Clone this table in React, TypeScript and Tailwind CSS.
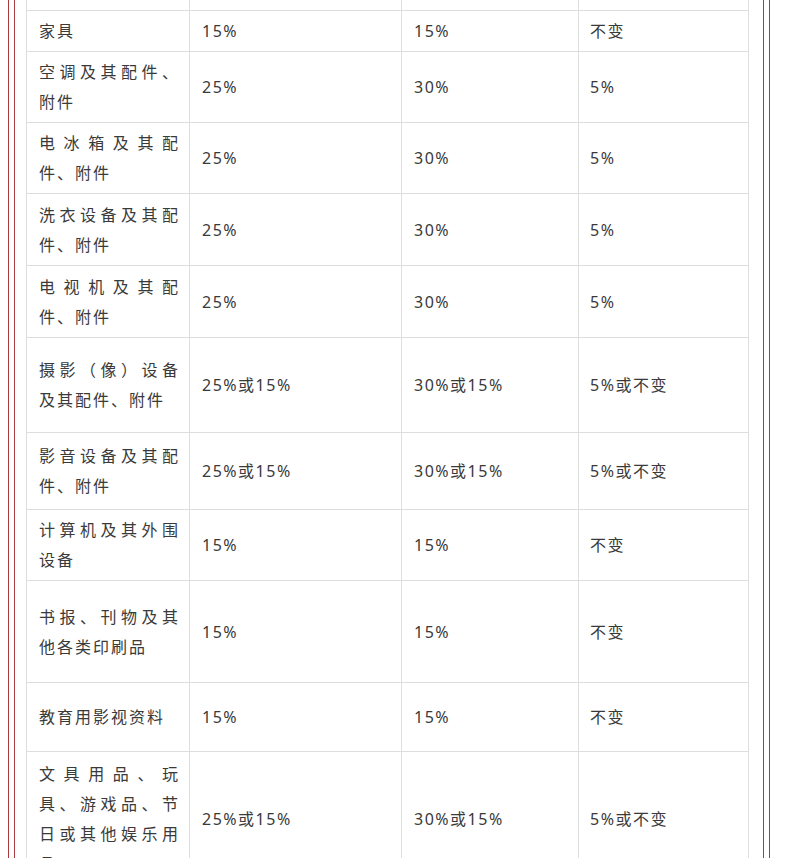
import React from "react";

type Row = { h: number; a: string; b: string; c: string; d: string };

const rows: Row[] = [
  { h: 40, a: "家具", b: "15%", c: "15%", d: "不变" },
  { h: 70, a: "空调及其配件、附件", b: "25%", c: "30%", d: "5%" },
  { h: 70, a: "电冰箱及其配件、附件", b: "25%", c: "30%", d: "5%" },
  { h: 71, a: "洗衣设备及其配件、附件", b: "25%", c: "30%", d: "5%" },
  { h: 71, a: "电视机及其配件、附件", b: "25%", c: "30%", d: "5%" },
  { h: 94, a: "摄影（像）设备及其配件、附件", b: "25%或15%", c: "30%或15%", d: "5%或不变" },
  { h: 76, a: "影音设备及其配件、附件", b: "25%或15%", c: "30%或15%", d: "5%或不变" },
  { h: 70, a: "计算机及其外围设备", b: "15%", c: "15%", d: "不变" },
  { h: 101, a: "书报、刊物及其他各类印刷品", b: "15%", c: "15%", d: "不变" },
  { h: 68, a: "教育用影视资料", b: "15%", c: "15%", d: "不变" },
  { h: 133, a: "文具用品、玩具、游戏品、节日或其他娱乐用品。", b: "25%或15%", c: "30%或15%", d: "5%或不变" },
];

export default function App() {
  return (
    <div
      className="w-[786px] h-[858px] overflow-hidden bg-white"
      style={{ fontFamily: '"Noto Sans", "Noto Sans CJK SC", sans-serif' }}
    >
      <div className="ml-[8px] w-[762px] h-full border-x border-[#ad3b3b] px-[5px]">
        <div className="h-full border-x border-[#ad3b3b] pl-[11px]">
          <div className="w-[723px] bg-[#dedede] px-px pb-px grid grid-cols-[162px_211px_176px_169px] gap-px text-[16px] leading-[30px] text-[#3a3a3a]">
            <div className="bg-white h-[10px]" />
            <div className="bg-white h-[10px]" />
            <div className="bg-white h-[10px]" />
            <div className="bg-white h-[10px]" />
            {rows.map((r, i) => (
              <React.Fragment key={i}>
                <div className="bg-white flex items-center pl-[12px] pr-[9px]" style={{ height: r.h }}>
                  <div className="w-full text-justify tracking-[2px]">{r.a}</div>
                </div>
                <div className="bg-white flex items-center pl-[12px]" style={{ height: r.h }}>
                  <div className="tracking-[1.5px]">{r.b}</div>
                </div>
                <div className="bg-white flex items-center pl-[12px]" style={{ height: r.h }}>
                  <div className="tracking-[1.5px]">{r.c}</div>
                </div>
                <div className="bg-white flex items-center pl-[11px]" style={{ height: r.h }}>
                  <div className="tracking-[1.5px]">{r.d}</div>
                </div>
              </React.Fragment>
            ))}
          </div>
        </div>
      </div>
    </div>
  );
}
